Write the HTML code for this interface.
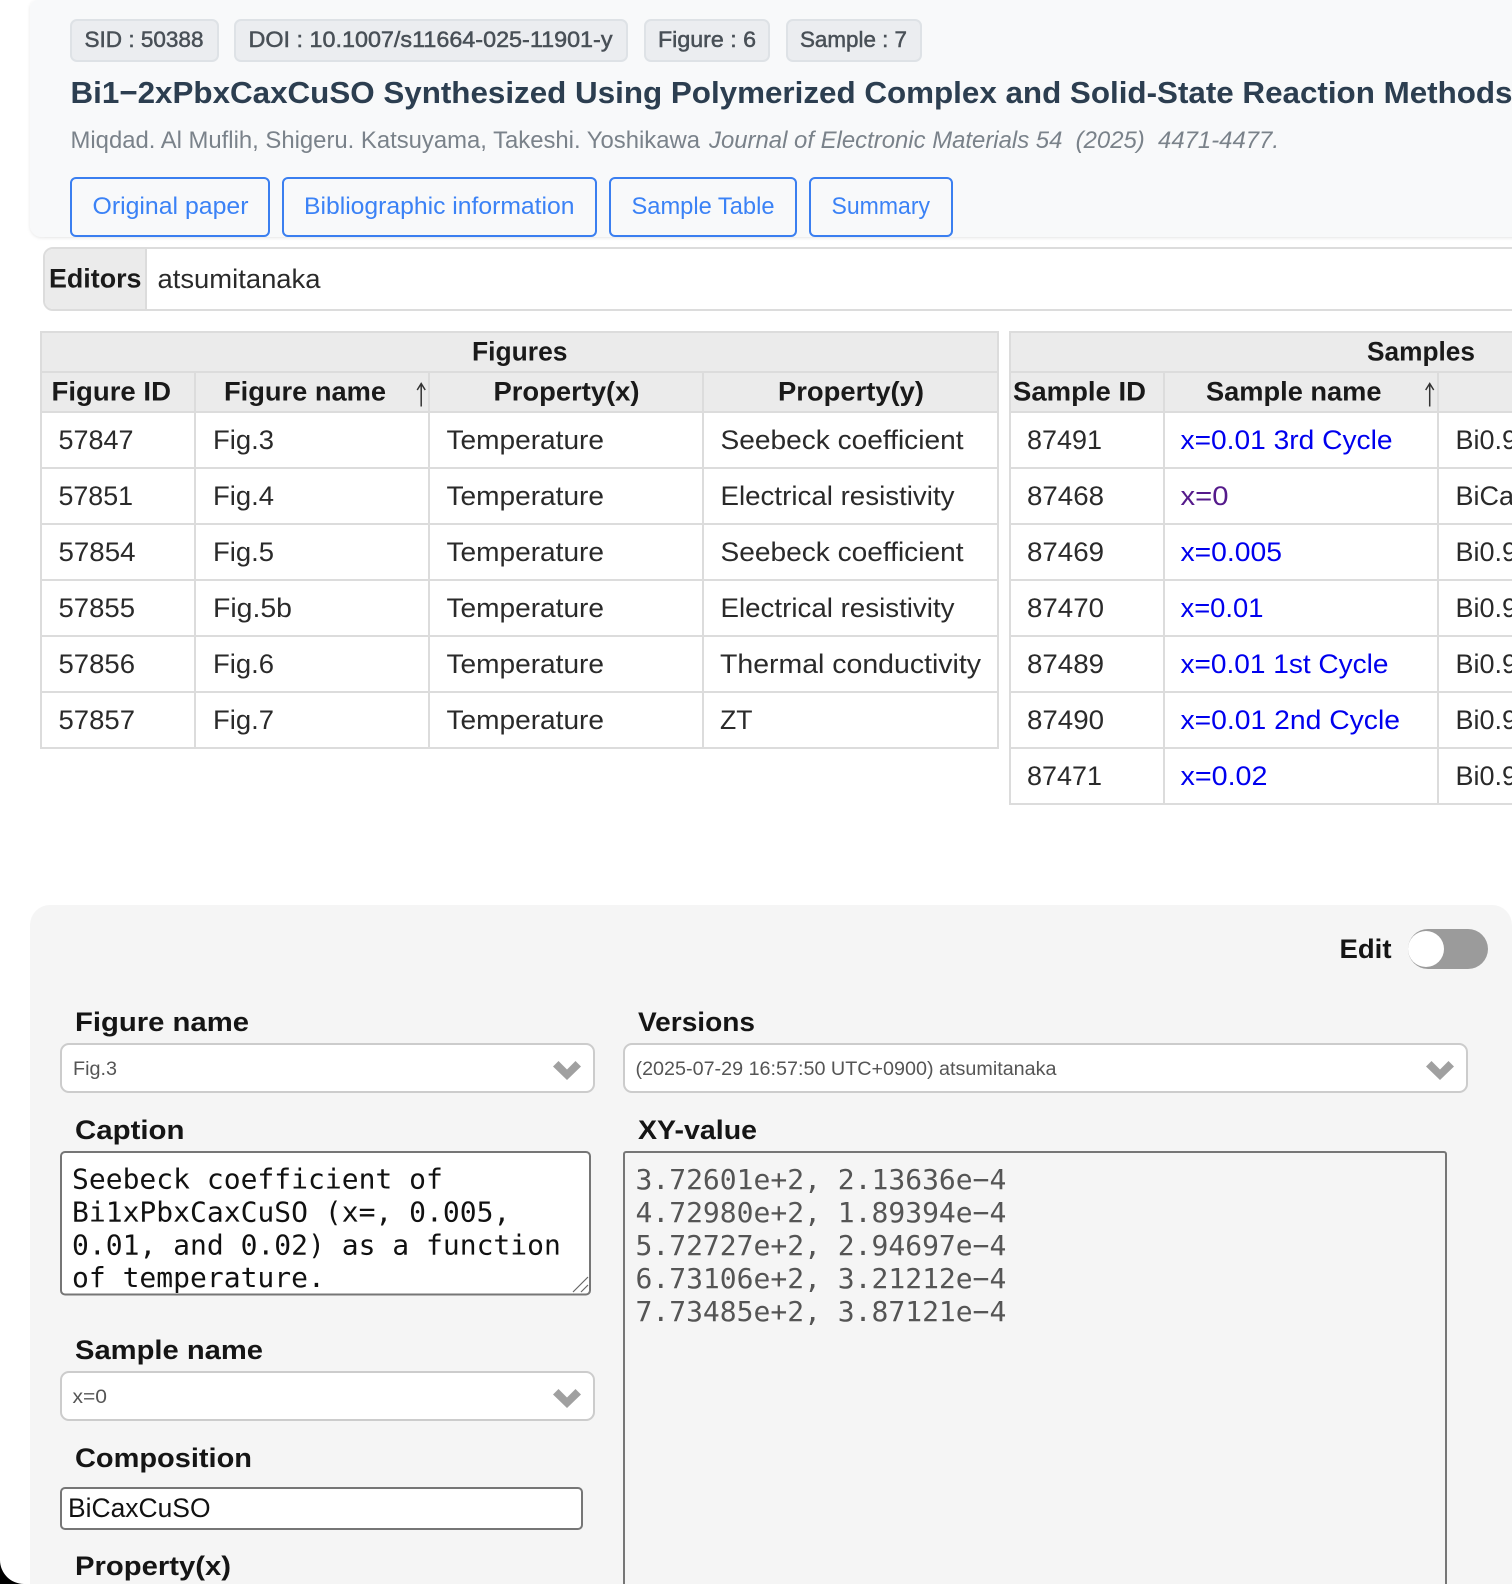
<!DOCTYPE html>
<html lang="en">
<head>
<meta charset="utf-8">
<title>Bi1−2xPbxCaxCuSO Synthesized Using Polymerized Complex and Solid-State Reaction Methods</title>
<style>
html,body{margin:0;padding:0;background:#fff;width:1512px;height:1584px;overflow:hidden}
svg{display:block}
text{font-family:"Liberation Sans",sans-serif;white-space:pre}
.b{font-size:22px;fill:#495057;stroke:#495057;stroke-width:.5px}
.h{font-size:31px;font-weight:700;fill:#2c3e50}
.a{font-size:24px;fill:#7a828a}
.i{font-style:italic}
.l{font-size:24px;fill:#3b82f6}
.th{font-size:27px;font-weight:700;fill:#1a1a1a}
.td{font-size:27px;fill:#2a2a2a}
.bl{fill:#0000ee}
.vi{fill:#551a8b}
.lb{font-size:27px;font-weight:700;fill:#151515}
.s{font-size:19px;fill:#555}
.m{font-family:"DejaVu Sans Mono",monospace;font-size:28px;fill:#111}
.g{fill:#555}
</style>
</head>
<body>
<svg xmlns="http://www.w3.org/2000/svg" width="1512" height="1584" viewBox="0 0 1512 1584">
<defs>
<filter id="sh" x="-2%" y="-5%" width="104%" height="112%"><feDropShadow dx="0" dy="1" stdDeviation="1.5" flood-color="#000" flood-opacity=".1"/></filter>
<clipPath id="ta"><rect x="62" y="1153" width="527" height="140"/></clipPath>
</defs>
<rect width="1512" height="1584" fill="#fff"/>

<!-- header card -->
<path d="M38 0H1520V237H42a12 12 0 0 1-12-12V8a8 8 0 0 1 8-8Z" fill="#f8f9fa" filter="url(#sh)"/>
<g fill="#ebedf0" stroke="#dee2e6" stroke-width="2">
<rect x="71" y="20" width="147" height="41" rx="6"/>
<rect x="235" y="20" width="392" height="41" rx="6"/>
<rect x="645" y="20" width="124" height="41" rx="6"/>
<rect x="787" y="20" width="134" height="41" rx="6"/>
</g>
<text class="b" x="84.500" y="47" textLength="119" lengthAdjust="spacingAndGlyphs">SID : 50388</text>
<text class="b" x="248.500" y="47" textLength="364" lengthAdjust="spacingAndGlyphs">DOI : 10.1007/s11664-025-11901-y</text>
<text class="b" x="658" y="47" textLength="98" lengthAdjust="spacingAndGlyphs">Figure : 6</text>
<text class="b" x="800" y="47" textLength="107" lengthAdjust="spacingAndGlyphs">Sample : 7</text>
<text class="h" x="70.500" y="103" textLength="1442" lengthAdjust="spacingAndGlyphs">Bi1−2xPbxCaxCuSO Synthesized Using Polymerized Complex and Solid-State Reaction Methods</text>
<text class="a" x="70.500" y="148" textLength="629.500" lengthAdjust="spacingAndGlyphs">Miqdad. Al Muflih, Shigeru. Katsuyama, Takeshi. Yoshikawa</text>
<text class="a i" x="709" y="148" textLength="570" lengthAdjust="spacingAndGlyphs">Journal of Electronic Materials 54  (2025)  4471-4477.</text>
<g fill="none" stroke="#3b7ff0" stroke-width="2">
<rect x="71" y="178" width="198" height="58" rx="5"/>
<rect x="283" y="178" width="313" height="58" rx="5"/>
<rect x="610" y="178" width="186" height="58" rx="5"/>
<rect x="810" y="178" width="142" height="58" rx="5"/>
</g>
<text class="l" x="92.500" y="214" textLength="156" lengthAdjust="spacingAndGlyphs">Original paper</text>
<text class="l" x="304" y="214" textLength="270.500" lengthAdjust="spacingAndGlyphs">Bibliographic information</text>
<text class="l" x="631.500" y="214" textLength="143" lengthAdjust="spacingAndGlyphs">Sample Table</text>
<text class="l" x="831.500" y="214" textLength="98.500" lengthAdjust="spacingAndGlyphs">Summary</text>

<!-- editors -->
<path d="M53 248H1520V310H53a9 9 0 0 1-9-9V257a9 9 0 0 1 9-9Z" fill="#fff" stroke="#dcdcdc" stroke-width="2"/>
<path d="M53 249H146V309H53a8 8 0 0 1-8-8V257a8 8 0 0 1 8-8Z" fill="#ebebeb"/>
<rect x="145" y="249" width="2" height="60" fill="#dcdcdc"/>
<text class="th" x="49" y="287.500" textLength="92.500" lengthAdjust="spacingAndGlyphs">Editors</text>
<text class="td" x="157.500" y="288" textLength="163" lengthAdjust="spacingAndGlyphs">atsumitanaka</text>

<!-- figures table -->
<rect x="41" y="332" width="957" height="80" fill="#ebebeb"/>
<rect x="1010" y="332" width="510" height="80" fill="#ebebeb"/>
<g stroke="#dcdcdc" stroke-width="2" fill="none">
<path d="M40 332H999M40 372H999M40 412H999M40 468H999M40 524H999M40 580H999M40 636H999M40 692H999M40 748H999"/>
<path d="M41 331V749M998 331V749M195 372V749M429 372V749M703 372V749"/>
<path d="M1009 332H1520M1009 372H1520M1009 412H1520M1009 468H1520M1009 524H1520M1009 580H1520M1009 636H1520M1009 692H1520M1009 748H1520M1009 804H1520"/>
<path d="M1010 331V805M1164 372V805M1438 372V805"/>
</g>

<text class="th" x="472" y="360.500" textLength="95.500" lengthAdjust="spacingAndGlyphs">Figures</text>
<text class="th" x="51.500" y="400.500" textLength="119.500" lengthAdjust="spacingAndGlyphs">Figure ID</text>
<text class="th" x="224" y="400.500" textLength="162" lengthAdjust="spacingAndGlyphs">Figure name</text>
<path d="M421.200 384V406.500M417.200 390L421.200 383.500L425.200 390" fill="none" stroke="#333" stroke-width="1.500"/>
<text class="th" x="493.500" y="400.500" textLength="146" lengthAdjust="spacingAndGlyphs">Property(x)</text>
<text class="th" x="778" y="400.500" textLength="146" lengthAdjust="spacingAndGlyphs">Property(y)</text>

<text class="td" x="58.500" y="449" textLength="75" lengthAdjust="spacingAndGlyphs">57847</text>
<text class="td" x="213" y="449" textLength="61" lengthAdjust="spacingAndGlyphs">Fig.3</text>
<text class="td" x="446.500" y="449" textLength="157.500" lengthAdjust="spacingAndGlyphs">Temperature</text>
<text class="td" x="720.500" y="449" textLength="243" lengthAdjust="spacingAndGlyphs">Seebeck coefficient</text>

<text class="td" x="58.500" y="505" textLength="74.500" lengthAdjust="spacingAndGlyphs">57851</text>
<text class="td" x="213" y="505" textLength="61" lengthAdjust="spacingAndGlyphs">Fig.4</text>
<text class="td" x="446.500" y="505" textLength="157.500" lengthAdjust="spacingAndGlyphs">Temperature</text>
<text class="td" x="720.500" y="505" textLength="234" lengthAdjust="spacingAndGlyphs">Electrical resistivity</text>

<text class="td" x="58.500" y="561" textLength="77" lengthAdjust="spacingAndGlyphs">57854</text>
<text class="td" x="213" y="561" textLength="61" lengthAdjust="spacingAndGlyphs">Fig.5</text>
<text class="td" x="446.500" y="561" textLength="157.500" lengthAdjust="spacingAndGlyphs">Temperature</text>
<text class="td" x="720.500" y="561" textLength="243" lengthAdjust="spacingAndGlyphs">Seebeck coefficient</text>

<text class="td" x="58.500" y="617" textLength="76.500" lengthAdjust="spacingAndGlyphs">57855</text>
<text class="td" x="213" y="617" textLength="79" lengthAdjust="spacingAndGlyphs">Fig.5b</text>
<text class="td" x="446.500" y="617" textLength="157.500" lengthAdjust="spacingAndGlyphs">Temperature</text>
<text class="td" x="720.500" y="617" textLength="234" lengthAdjust="spacingAndGlyphs">Electrical resistivity</text>

<text class="td" x="58.500" y="673" textLength="76.500" lengthAdjust="spacingAndGlyphs">57856</text>
<text class="td" x="213" y="673" textLength="61" lengthAdjust="spacingAndGlyphs">Fig.6</text>
<text class="td" x="446.500" y="673" textLength="157.500" lengthAdjust="spacingAndGlyphs">Temperature</text>
<text class="td" x="720" y="673" textLength="261" lengthAdjust="spacingAndGlyphs">Thermal conductivity</text>

<text class="td" x="58.500" y="729" textLength="76.500" lengthAdjust="spacingAndGlyphs">57857</text>
<text class="td" x="213" y="729" textLength="61" lengthAdjust="spacingAndGlyphs">Fig.7</text>
<text class="td" x="446.500" y="729" textLength="157.500" lengthAdjust="spacingAndGlyphs">Temperature</text>
<text class="td" x="720" y="729" textLength="32.500" lengthAdjust="spacingAndGlyphs">ZT</text>

<!-- samples table -->
<text class="th" x="1367" y="360.500" textLength="108" lengthAdjust="spacingAndGlyphs">Samples</text>
<text class="th" x="1013" y="400.500" textLength="133" lengthAdjust="spacingAndGlyphs">Sample ID</text>
<text class="th" x="1206" y="400.500" textLength="175.500" lengthAdjust="spacingAndGlyphs">Sample name</text>
<path d="M1429.700 384V406.500M1425.700 390L1429.700 383.500L1433.700 390" fill="none" stroke="#333" stroke-width="1.500"/>

<text class="td" x="1027" y="449" textLength="75" lengthAdjust="spacingAndGlyphs">87491</text>
<text class="td bl" x="1180.500" y="449" textLength="212" lengthAdjust="spacingAndGlyphs">x=0.01 3rd Cycle</text>
<text class="td" x="1455.500" y="449">Bi0.99Pb0.01</text>

<text class="td" x="1027" y="505" textLength="77" lengthAdjust="spacingAndGlyphs">87468</text>
<text class="td vi" x="1180.500" y="505" textLength="48" lengthAdjust="spacingAndGlyphs">x=0</text>
<text class="td" x="1455.500" y="505">BiCaxCuSO</text>

<text class="td" x="1027" y="561" textLength="77" lengthAdjust="spacingAndGlyphs">87469</text>
<text class="td bl" x="1180.500" y="561" textLength="101.500" lengthAdjust="spacingAndGlyphs">x=0.005</text>
<text class="td" x="1455.500" y="561">Bi0.99Pb0.01</text>

<text class="td" x="1027" y="617" textLength="77" lengthAdjust="spacingAndGlyphs">87470</text>
<text class="td bl" x="1180.500" y="617" textLength="83" lengthAdjust="spacingAndGlyphs">x=0.01</text>
<text class="td" x="1455.500" y="617">Bi0.98Pb0.02</text>

<text class="td" x="1027" y="673" textLength="77" lengthAdjust="spacingAndGlyphs">87489</text>
<text class="td bl" x="1180.500" y="673" textLength="208" lengthAdjust="spacingAndGlyphs">x=0.01 1st Cycle</text>
<text class="td" x="1455.500" y="673">Bi0.98Pb0.02</text>

<text class="td" x="1027" y="729" textLength="77" lengthAdjust="spacingAndGlyphs">87490</text>
<text class="td bl" x="1180.500" y="729" textLength="219.500" lengthAdjust="spacingAndGlyphs">x=0.01 2nd Cycle</text>
<text class="td" x="1455.500" y="729">Bi0.98Pb0.02</text>

<text class="td" x="1027" y="785" textLength="75" lengthAdjust="spacingAndGlyphs">87471</text>
<text class="td bl" x="1180.500" y="785" textLength="87" lengthAdjust="spacingAndGlyphs">x=0.02</text>
<text class="td" x="1455.500" y="785">Bi0.96Pb0.04</text>

<!-- editor panel -->
<path d="M50 905H1492a20 20 0 0 1 20 20V1600H30V925a20 20 0 0 1 20-20Z" fill="#f5f5f5"/>
<text class="lb" x="1339.500" y="958" textLength="52" lengthAdjust="spacingAndGlyphs">Edit</text>
<rect x="1408" y="929" width="80" height="40" rx="20" fill="#9b9b9b"/>
<circle cx="1426" cy="949" r="18" fill="#fff"/>

<text class="lb" x="75" y="1031" textLength="174" lengthAdjust="spacingAndGlyphs">Figure name</text>
<rect x="61" y="1044" width="533" height="48" rx="8" fill="#fff" stroke="#ccc" stroke-width="2"/>
<text class="s" x="73" y="1075" textLength="44" lengthAdjust="spacingAndGlyphs">Fig.3</text>
<path d="M553 1066.500L558.500 1061L567 1069.500L575.500 1061L581 1066.500L567 1080Z" fill="#a0a0a0"/>

<text class="lb" x="638" y="1031" textLength="117" lengthAdjust="spacingAndGlyphs">Versions</text>
<rect x="624" y="1044" width="843" height="48" rx="8" fill="#fff" stroke="#ccc" stroke-width="2"/>
<text class="s" x="635.500" y="1075" textLength="421" lengthAdjust="spacingAndGlyphs">(2025-07-29 16:57:50 UTC+0900) atsumitanaka</text>
<path d="M1426 1066.500L1431.500 1061L1440 1069.500L1448.500 1061L1454 1066.500L1440 1080Z" fill="#a0a0a0"/>

<text class="lb" x="75" y="1139" textLength="109.500" lengthAdjust="spacingAndGlyphs">Caption</text>
<rect x="61" y="1152" width="529" height="142.500" rx="4" fill="#fff" stroke="#767676" stroke-width="2"/>
<g clip-path="url(#ta)">
<text class="m" x="72" y="1188.500">Seebeck coefficient of</text>
<text class="m" x="72" y="1221.500">Bi1xPbxCaxCuSO (x=, 0.005,</text>
<text class="m" x="72" y="1254.500">0.01, and 0.02) as a function</text>
<text class="m" x="72" y="1287">of temperature.</text>
</g>
<path d="M573 1292L588 1277M581 1292L588 1285" stroke="#666" stroke-width="1.200" fill="none"/>

<text class="lb" x="638" y="1139" textLength="119" lengthAdjust="spacingAndGlyphs">XY-value</text>
<rect x="624" y="1152" width="822" height="460" rx="2" fill="#f5f5f5" stroke="#767676" stroke-width="2"/>
<text class="m g" x="635.500" y="1189">3.72601e+2, 2.13636e−4</text>
<text class="m g" x="635.500" y="1222">4.72980e+2, 1.89394e−4</text>
<text class="m g" x="635.500" y="1255">5.72727e+2, 2.94697e−4</text>
<text class="m g" x="635.500" y="1288">6.73106e+2, 3.21212e−4</text>
<text class="m g" x="635.500" y="1321">7.73485e+2, 3.87121e−4</text>

<text class="lb" x="75" y="1359" textLength="188" lengthAdjust="spacingAndGlyphs">Sample name</text>
<rect x="61" y="1372" width="533" height="48" rx="8" fill="#fff" stroke="#ccc" stroke-width="2"/>
<text class="s" x="72.500" y="1403" textLength="34.500" lengthAdjust="spacingAndGlyphs">x=0</text>
<path d="M553 1394.500L558.500 1389L567 1397.500L575.500 1389L581 1394.500L567 1408Z" fill="#a0a0a0"/>

<text class="lb" x="75" y="1467" textLength="177" lengthAdjust="spacingAndGlyphs">Composition</text>
<rect x="61" y="1488" width="521" height="41" rx="4" fill="#fff" stroke="#767676" stroke-width="2"/>
<text x="68" y="1517" font-size="27" fill="#111" textLength="142.500" lengthAdjust="spacingAndGlyphs">BiCaxCuSO</text>

<text class="lb" x="75" y="1575" textLength="156" lengthAdjust="spacingAndGlyphs">Property(x)</text>

<!-- window corner -->
<path d="M0 1560V1584H24A24 24 0 0 1 0 1560Z" fill="#000"/>
</svg>
</body>
</html>
